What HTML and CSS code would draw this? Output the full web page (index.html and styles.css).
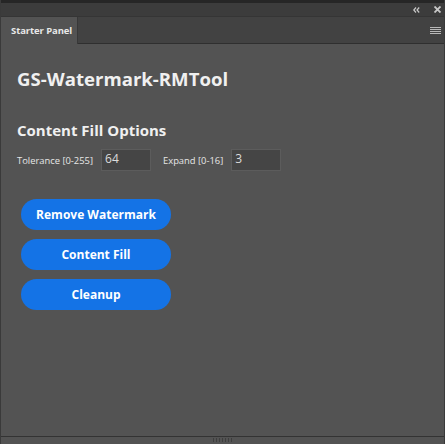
FILE: index.html
```html
<!DOCTYPE html>
<html>
<head>
<meta charset="utf-8">
<link rel="stylesheet" href="styles.css">
</head>
<body>
<div class="app">
  <div class="topstrip"></div>
  <div class="header">
    <svg class="icon-collapse" width="7" height="6" viewBox="0 0 7 6"><path d="M3 0.5 L0.8 3 L3 5.5 M6.2 0.5 L4 3 L6.2 5.5" stroke="#c8c8c8" stroke-width="1.2" fill="none"/></svg>
    <svg class="icon-close" width="7" height="7" viewBox="0 0 7 7"><path d="M0.5 0.5 L6.5 6.5 M6.5 0.5 L0.5 6.5" stroke="#c8c8c8" stroke-width="1.8" fill="none"/></svg>
  </div>
  <div class="tabbar">
    <div class="tab">Starter Panel</div>
    <div class="tabfill">
      <svg class="menu" width="11" height="7" viewBox="0 0 11 7"><path d="M0 0.5H11M0 2.5H11M0 4.5H11M0 6.5H11" stroke="#b8b8b8" stroke-width="1"/></svg>
    </div>
  </div>
  <div class="content">
    <h1 class="title">GS-Watermark-RMTool</h1>
    <h2 class="subtitle">Content Fill Options</h2>
    <div class="options">
      <label class="lbl">Tolerance [0-255]</label>
      <div class="field">64</div>
      <label class="lbl lbl2">Expand [0-16]</label>
      <div class="field">3</div>
    </div>
    <div class="buttons">
      <button class="btn">Remove Watermark</button>
      <button class="btn">Content Fill</button>
      <button class="btn">Cleanup</button>
    </div>
  </div>
  <div class="footer">
    <div class="grip"></div>
  </div>
</div>
</body>
</html>
```
FILE: styles.css
```css
html, body {
  margin: 0;
  padding: 0;
  background: #535353;
}
.app {
  width: 445px;
  height: 444px;
  display: flex;
  flex-direction: column;
  box-sizing: border-box;
  border-left: 1px solid #3a3a3a;
  border-right: 1px solid #3a3a3a;
  font-family: "Open Sans", "Noto Sans", sans-serif;
}
.topstrip {
  height: 3px;
  background: #262626;
}
.header {
  height: 13px;
  background: #3c3c3c;
  border-bottom: 1px solid #353535;
  display: flex;
  align-items: center;
  justify-content: flex-end;
  gap: 14px;
  padding-right: 3px;
}
.tabbar {
  height: 27px;
  display: flex;
  background: #424242;
}
.tab {
  width: 77px;
  background: #535353;
  color: #e8e8e8;
  font-size: 9.5px;
  font-weight: 700;
  letter-spacing: -0.1px;
  display: flex;
  align-items: center;
  padding-left: 10px;
  box-sizing: border-box;
  border-right: 1px solid #383838;
}
.tabfill {
  flex: 1;
  border-bottom: 1px solid #2f2f2f;
  display: flex;
  justify-content: flex-end;
  align-items: center;
  padding-right: 3px;
}
.content {
  flex: 1;
  padding: 22px 16px 0 16px;
}
.title {
  margin: 0;
  color: #f0f0f0;
  font-size: 18.6px;
  font-weight: 700;
  line-height: 26px;
}
.subtitle {
  margin: 28px 0 0 0;
  color: #f0f0f0;
  font-size: 15px;
  font-weight: 700;
  line-height: 20px;
}
.options {
  display: flex;
  align-items: center;
  margin-top: 9px;
}
.lbl {
  color: #e6e6e6;
  font-size: 9.4px;
}
.lbl2 {
  margin-left: 12px;
}
.field {
  width: 50px;
  height: 22px;
  box-sizing: border-box;
  background: #454545;
  border: 1px solid #5c5c5c;
  color: #dcdcdc;
  font-size: 12px;
  line-height: 18px;
  padding-left: 3px;
  margin-left: 8px;
}
.buttons {
  display: flex;
  flex-direction: column;
  gap: 9px;
  margin-top: 28px;
  padding-left: 4px;
}
.btn {
  width: 150px;
  height: 31px;
  border: none;
  border-radius: 16px;
  background: #1473e6;
  color: #ffffff;
  font-family: "Open Sans", "Noto Sans", sans-serif;
  font-size: 12px;
  font-weight: 700;
  padding: 0;
}
.footer {
  height: 7px;
  border-top: 1px solid #333333;
  display: flex;
  justify-content: center;
}
.grip {
  width: 20px;
  height: 4px;
  margin-top: 1px;
  background: repeating-linear-gradient(90deg, #3e3e3e 0 1px, transparent 1px 3px);
}
```
